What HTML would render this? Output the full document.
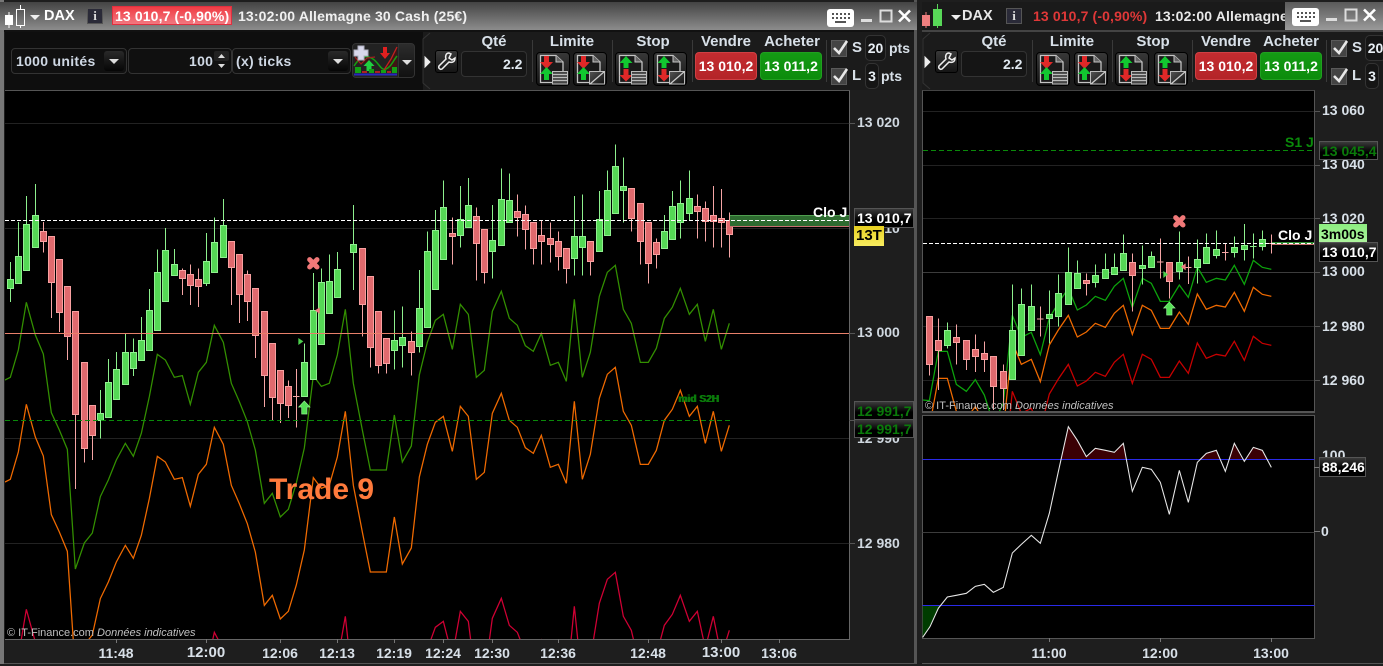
<!DOCTYPE html>
<html><head><meta charset="utf-8"><title>DAX</title>
<style>
html,body{margin:0;padding:0;background:#1e1e1e;width:1383px;height:666px;overflow:hidden}
#p{position:relative;width:1383px;height:666px;overflow:hidden;background:#1e1e1e;font:bold 14px/16px "Liberation Sans",Arial,sans-serif;color:#d8e0e8}
.a{position:absolute;box-sizing:border-box}
.t{position:absolute;white-space:nowrap}
.c{transform:translateX(-50%)}
.hl{font-size:15px}
.ls{letter-spacing:.3px}
.dd{position:absolute;width:20px;height:20px;border-radius:3px;background:linear-gradient(#2a2a2a,#050505)}
.dd:after{content:"";position:absolute;left:5px;top:8px;border:5px solid transparent;border-top:5px solid #ddd;border-bottom:0}
.box{position:absolute;box-sizing:border-box;border:1px solid #333;border-radius:4px;background:#101010}
.btn{position:absolute;box-sizing:border-box;width:34px;height:34px;top:52px;border-radius:4px;border:1px solid #000;background:linear-gradient(#383838,#141414)}
.btn svg{position:absolute;left:0;top:0}
.lab{position:absolute;box-sizing:border-box;white-space:nowrap;background:linear-gradient(#3a3a3a,#000 60%);border:1px solid #555;color:#fff;padding-left:2px;line-height:18px}
.sep{position:absolute;width:1px;top:40px;height:42px;background:#3a3a3a}
.chk{position:absolute;box-sizing:border-box;left:831px;width:16px;height:17px;background:#444;border:1px solid #5a5a5a}
svg{display:block}
</style></head><body><div id="p">

<!-- left window chrome -->
<div class="a" style="left:0;top:0;width:917px;height:664px;background:#1e1e1e;border-left:4px solid #777;border-right:3px solid #555"></div>
<div class="a" style="left:0;top:2px;width:917px;height:28px;background:linear-gradient(#444,#8c8c8c)"></div>
<div class="a" style="left:4px;top:30px;width:910px;height:2px;background:#111"></div>
<div class="a" style="left:5px;top:32px;width:909px;height:58px;background:#1b1b1b"></div>
<div class="a" style="left:5px;top:32px;width:418px;height:58px;background:#0e0e0e"></div>
<div class="a" style="left:5px;top:90px;width:845px;height:1px;background:#555"></div>
<div class="a" style="left:5px;top:91px;width:845px;height:549px;background:#000;border-right:1px solid #666;border-bottom:1px solid #666"></div>
<div class="a" style="left:4px;top:663px;width:910px;height:1px;background:#555"></div>

<!-- right window chrome -->
<div class="a" style="left:919px;top:0;width:464px;height:664px;background:#1e1e1e"></div>
<div class="a" style="left:922px;top:2px;width:461px;height:28px;background:#1a1a1a"></div>
<div class="a" style="left:1285px;top:2px;width:98px;height:28px;background:linear-gradient(#5a5a5a,#9a9a9a)"></div>
<div class="a" style="left:922px;top:30px;width:461px;height:2px;background:#444"></div>
<div class="a" style="left:922px;top:32px;width:461px;height:58px;background:#1b1b1b"></div>
<div class="a" style="left:922px;top:90px;width:393px;height:323px;background:#000;border:1px solid #555;border-top-color:#444;border-width:1px 1px 2px 1px"></div>
<div class="a" style="left:922px;top:415px;width:393px;height:224px;background:#000;border:1px solid #555"></div>
<div class="a" style="left:922px;top:663px;width:461px;height:1px;background:#555"></div>

<!-- charts -->
<svg class="a" style="left:0;top:0" width="1383" height="666" viewBox="0 0 1383 666">
<defs>
<clipPath id="cl"><rect x="5" y="91" width="844" height="548"/></clipPath>
<clipPath id="cr"><rect x="923" y="91" width="391" height="320"/></clipPath>
<path id="sr" fill="none" d="M8 630L28 632 55 484 82 484 109 583 139 604 166 569 193 615 220 700 250 640 277 376 304 442 334 427 361 494 388 384 415 339 445 295 472 360 499 345 526 319 556 331 583 289 610 265 637 352 667 265 694 280 721 334 748 334 778 285 805 322 832 231 859 277 889 265 916 270 943 226 973 283 1000 211 1027 232 1054 238"/>
</defs>

<!-- LEFT CHART -->
<g clip-path="url(#cl)">
<g stroke="#222" stroke-width="1" shape-rendering="crispEdges">
<path d="M5 123.500H849M5 228.500H849M5 438.500H849M5 543.500H849"/>
</g>
<g transform="translate(0 130) scale(.33333)" stroke-width="3.800" stroke-linejoin="miter" fill="none">
<path stroke="#339000" d="M15 750L31 742 55 660 79 517 106 615 130 672 154 848 178 900 202 958 226 1317 253 1239 277 1209 301 1100 325 1050 349 990 376 940 400 979 424 910 448 800 472 673 496 690 523 742 547 737 571 823 595 727 619 697 643 586 670 637 694 760 718 815 742 875 766 960 793 1120 817 1090 841 1161 865 1138 889 1059 913 954 940 737 964 769 988 760 1012 675 1036 538 1060 760 1087 900 1111 1020 1135 1020 1159 1020 1183 855 1207 996 1234 948 1258 735 1282 637 1306 571 1330 553 1357 658 1381 523 1405 553 1429 742 1453 721 1477 544 1504 484 1528 565 1552 586 1576 647 1600 664 1624 610 1651 706 1675 697 1699 754 1723 508 1747 742 1771 667 1798 499 1822 427 1846 406 1870 538 1894 580 1921 697 1945 697 1969 655 1993 565 2017 532 2041 475 2068 553 2092 523 2116 634 2140 538 2164 658 2188 580"/>
<path stroke="#f06a00" transform="translate(0 306)" d="M15 750L31 742 55 660 79 517 106 615 130 672 154 848 178 900 202 958 224.200 1290 235.300 1290 253 1239 277 1209 301 1100 325 1050 349 990 376 940 400 979 424 910 448 800 472 673 496 690 523 742 547 737 571 823 595 727 619 697 643 586 670 637 694 760 718 815 742 875 766 960 793 1120 817 1090 841 1161 865 1138 889 1059 913 954 940 737 964 769 988 760 1012 675 1036 538 1060 760 1087 900 1111 1020 1135 1020 1159 1020 1183 855 1207 996 1234 948 1258 735 1282 637 1306 571 1330 553 1357 658 1381 523 1405 553 1429 742 1453 721 1477 544 1504 484 1528 565 1552 586 1576 647 1600 664 1624 610 1651 706 1675 697 1699 754 1723 508 1747 742 1771 667 1798 499 1822 427 1846 406 1870 538 1894 580 1921 697 1945 697 1969 655 1993 565 2017 532 2041 475 2068 553 2092 523 2116 634 2140 538 2164 658 2188 580"/>
<path stroke="#d00034" transform="translate(0 921)" d="M56.700 650L79 517 106 615 120.700 650M629.200 650L643 586 670 637 672.500 650M1016.400 650L1036 538 1048.100 650M1278.800 650L1282 637 1306 571 1330 553 1354.900 650M1358.400 650L1381 523 1405 553 1417.300 650M1462.600 650L1477 544 1504 484 1528 565 1552 586 1576 647 1580.200 650M1606.200 650L1624 610 1635.300 650M1709.100 650L1723 508 1737.600 650M1773.700 650L1798 499 1822 427 1846 406 1870 538 1894 580 1910.200 650M1970.300 650L1993 565 2017 532 2041 475 2068 553 2092 523 2116 634 2140 538 2162.400 650M2166.500 650L2188 580"/>
</g>

<g transform="translate(0 130) scale(.33333)" shape-rendering="crispEdges">
<path stroke="#8df08d" stroke-width="3" fill="none" d="M31 396V516M55 276V460M79 198V422M106 162V352M301 780V926M325 687V862M349 666V808M376 612V764M400 625V738M424 561V691M448 477V661M472 358V602M496 294V515M523 357V437M619 309V468M643 262V428M670 207V382M913 640V800M940 429V748M964 415V643M988 373V550M1012 366V503"/>
<path stroke="#f5a5a5" stroke-width="3" fill="none" d="M130 276V368M154 320V564M178 388V606M202 468V690M226 544V1077M253 697V998M277 826V990M547 415V495M571 403V525M595 415V531M694 334V525M718 373V579M742 421V573M766 475V684M793 544V831M817 640V873M841 721V879M865 751V864M889 717V893M879 799H899"/>
<g transform="translate(-1 0)">
<path fill="#55d855" stroke="#90f090" stroke-width="3" d="M23 448h18V476h-18zM47 379h18V461h-18zM71 283h18V422h-18zM98 256h18V352h-18zM293 850h18V871h-18zM317 757h18V862h-18zM341 718h18V808h-18zM368 667h18V764h-18zM392 667h18V716h-18zM416 631h18V691h-18zM440 541h18V661h-18zM464 427h18V602h-18zM488 361h18V515h-18zM515 403h18V437h-18zM611 394h18V461h-18zM635 337h18V428h-18zM662 286h18V382h-18zM905 697h18V800h-18zM932 541h18V748h-18zM956 457h18V643h-18zM980 454h18V550h-18zM1004 418h18V503h-18z"/>
<path fill="#e06a6e" stroke="#f8a0a0" stroke-width="3" d="M122 304h18V335h-18zM146 319h18V458h-18zM170 388h18V548h-18zM194 469h18V620h-18zM218 544h18V854h-18zM245 697h18V956h-18zM269 826h18V916h-18zM539 421h18V445h-18zM563 433h18V467h-18zM587 448h18V470h-18zM686 334h18V412h-18zM710 373h18V493h-18zM734 433h18V515h-18zM758 475h18V616h-18zM785 544h18V736h-18zM809 640h18V802h-18zM833 721h18V820h-18zM857 769h18V826h-18z"/>
</g>
</g>
<g transform="translate(300 130) scale(.33333)" shape-rendering="crispEdges">
<path stroke="#8df08d" stroke-width="3" fill="none" d="M160 225V480M283 541V719M307 529V713M358 420V668M382 304V593M406 240V478M430 151V388M481 168V353M505 144V292M577 225V446M604 115V346M628 130V277M823 198V437M847 193V437M898 183V364M922 121V316M946 43V250M970 82V277"/>
<path stroke="#f5a5a5" stroke-width="3" fill="none" d="M187 355V620M211 439V713M235 544V731M259 625V731M334 604V737M457 262V404M529 232V452M553 298V461M652 193V320M676 226V359M700 277V404M724 271V403M751 277V398M775 304V422M799 355V461M871 334V437M994 175V305"/>
<g transform="translate(-1 0)">
<path fill="#55d855" stroke="#90f090" stroke-width="3" d="M152 343h18V367h-18zM275 631h18V661h-18zM299 622h18V646h-18zM350 535h18V650h-18zM374 364h18V593h-18zM398 301h18V478h-18zM422 232h18V388h-18zM473 268h18V316h-18zM497 226h18V292h-18zM569 331h18V364h-18zM596 208h18V346h-18zM620 211h18V277h-18zM815 319h18V385h-18zM839 319h18V352h-18zM890 268h18V364h-18zM914 181h18V316h-18zM938 109h18V250h-18zM962 169h18V181h-18z"/>
<path fill="#e06a6e" stroke="#f8a0a0" stroke-width="3" d="M179 355h18V523h-18zM203 439h18V652h-18zM227 544h18V706h-18zM251 625h18V700h-18zM326 634h18V667h-18zM449 310h18V319h-18zM521 259h18V340h-18zM545 298h18V427h-18zM644 244h18V262h-18zM668 253h18V298h-18zM692 277h18V355h-18zM716 316h18V334h-18zM743 325h18V343h-18zM767 334h18V379h-18zM791 355h18V415h-18zM863 334h18V394h-18zM986 175h18V265h-18z"/>
</g>
</g>
<g transform="translate(620 130) scale(.33333)" shape-rendering="crispEdges">
<path stroke="#8df08d" stroke-width="3" fill="none" d="M133 255V356M157 183V328M181 151V326M208 121V271"/>
<path stroke="#f5a5a5" stroke-width="3" fill="none" d="M61 220V404M85 277V461M109 325V416M232 193V326M256 214V335M280 168V352M304 177V352M328 247V383"/>
<g transform="translate(-1 0)">
<path fill="#55d855" stroke="#90f090" stroke-width="3" d="M125 304h18V356h-18zM149 229h18V328h-18zM173 220h18V277h-18zM200 205h18V250h-18z"/>
<path fill="#e06a6e" stroke="#f8a0a0" stroke-width="3" d="M53 220h18V334h-18zM77 277h18V401h-18zM101 337h18V373h-18zM224 229h18V244h-18zM248 235h18V274h-18zM272 256h18V274h-18zM296 265h18V277h-18zM320 271h18V313h-18z"/>
</g>
</g>
<!-- green band -->
<rect x="730" y="215" width="119" height="11" fill="#2e6b30"/>
<path d="M730 215.500H849" stroke="#4f9f4f" stroke-width="1"/>
<path d="M730 226.500H849" stroke="#c87070" stroke-width="1"/>
<path d="M5 333.500H849" stroke="#e8806a" stroke-width="1" shape-rendering="crispEdges"/>
<path d="M5 220.500H849" stroke="#fff" stroke-width="1" stroke-dasharray="4 2" shape-rendering="crispEdges"/>
<path d="M5 420.500H730" stroke="#0a8a0a" stroke-width="1" stroke-dasharray="5 3" shape-rendering="crispEdges"/>
<!-- markers -->
<g transform="translate(0 130) scale(.33333)">
<path d="M929 389L951 411M951 389L929 411" stroke="#f07878" stroke-width="15" stroke-linecap="round" fill="none"/>
<path d="M895 624L910 634 895 645z" fill="#4cd04c"/>
<path d="M959 532L945 541 959 552z" fill="#f07a80"/>
<path d="M913 813L930 831H921V852H905V831H896z" fill="#55e055" stroke="#90f090" stroke-width="2"/>
</g>
</g>
<path d="M849 123.500h6M849 333.500h6M849 543.500h6M849 420.500h5" stroke="#555" stroke-width="1" shape-rendering="crispEdges"/>
<path d="M116.500 639v4M206.500 639v4M280.500 639v4M337.500 639v4M394.500 639v4M443.500 639v4M492.500 639v4M558.500 639v4M648.500 639v4M721.500 639v4M779.500 639v4" stroke="#777" stroke-width="1" shape-rendering="crispEdges"/>

<!-- RIGHT CHART -->
<g clip-path="url(#cr)">
<path d="M923 111.500H1314M923 165.500H1314M923 218.500H1314M923 326.500H1314M923 380.500H1314" stroke="#222" stroke-width="1" shape-rendering="crispEdges"/>
<path d="M923 272.500H1314" stroke="#3c3c3c" stroke-width="1" shape-rendering="crispEdges"/>
<path d="M923 150.500H1314" stroke="#0a8a0a" stroke-width="1" stroke-dasharray="5 3" shape-rendering="crispEdges"/>
<g transform="translate(920 190) scale(.33333)" stroke-width="3.800">
<use href="#sr" stroke="#0ca40c"/>
<use href="#sr" stroke="#f06a00" transform="translate(0 81)"/>
<use href="#sr" stroke="#c80000" transform="translate(0 228)"/>
</g>
<g transform="translate(920 190) scale(.33333)" shape-rendering="crispEdges">
<path stroke="#8df08d" stroke-width="3" fill="none" d="M82 397V475M277 283V570M304 295V497M334 283V422M388 301V460M415 253V410M445 172V345M472 211V296M526 223V292M556 190V265M583 190V253M610 133V241M667 166V283M694 184V232"/>
<path stroke="#f5a5a5" stroke-width="3" fill="none" d="M28 379V557M55 385V600M109 403V524M139 451V540M166 433V546M193 454V546M220 499V660M250 523V660M361 349V440M351 387H371M499 250V317M637 190V365"/>
<g transform="translate(-1 0)">
<path fill="#55d855" stroke="#90f090" stroke-width="3" d="M74 421h18V467h-18zM269 421h18V569h-18zM296 343h18V497h-18zM326 349h18V422h-18zM380 373h18V386h-18zM407 310h18V380h-18zM437 247h18V344h-18zM464 250h18V296h-18zM518 256h18V277h-18zM548 238h18V265h-18zM575 232h18V253h-18zM602 190h18V241h-18zM659 226h18V235h-18zM686 199h18V232h-18z"/>
<path fill="#e06a6e" stroke="#f8a0a0" stroke-width="3" d="M20 379h18V523h-18zM47 451h18V482h-18zM101 442h18V458h-18zM131 451h18V509h-18zM158 478h18V500h-18zM185 490h18V509h-18zM212 499h18V590h-18zM242 544h18V596h-18zM491 271h18V280h-18zM629 217h18V256h-18z"/>
</g>
</g>
<g transform="translate(1150 190) scale(.33333)" shape-rendering="crispEdges">
<path stroke="#8df08d" stroke-width="3" fill="none" d="M88 124V268M142 148V280M169 130V220M199 121V205M253 139V202M283 102V211M310 130V205M300 170H320M337 121V181"/>
<path stroke="#f5a5a5" stroke-width="3" fill="none" d="M31 145V265M21 216H41M58 217V325M115 199V282M105 232H125M226 160V212M216 187H236M364 133V190M354 160H374"/>
<g transform="translate(-1 0)">
<path fill="#55d855" stroke="#90f090" stroke-width="3" d="M80 217h18V244h-18zM134 208h18V232h-18zM161 172h18V220h-18zM191 178h18V196h-18zM245 172h18V187h-18zM275 166h18V178h-18zM329 148h18V169h-18z"/>
<path fill="#e06a6e" stroke="#f8a0a0" stroke-width="3" d="M50 217h18V274h-18z"/>
</g>
</g>
<rect x="1272" y="242" width="42" height="2" fill="#2e8a30"/>
<path d="M1272 244.500H1314" stroke="#c87070" stroke-width="1"/>
<path d="M923 243.500H1314" stroke="#fff" stroke-width="1" stroke-dasharray="4 2" shape-rendering="crispEdges"/>
<g transform="translate(1150 190) scale(.33333)">
<path d="M77 83L99 105M99 83L77 105" stroke="#f07878" stroke-width="15" stroke-linecap="round" fill="none"/>
<path d="M40 243L54 253 40 264z" fill="#4cd04c"/>
<path d="M107 220L93 230 107 241z" fill="#f07a80"/>
<path d="M58 336L75 354H66V375H50V354H41z" fill="#55e055" stroke="#90f090" stroke-width="2"/>
</g>
</g>
<path d="M1314 111.500h6M1314 165.500h6M1314 218.500h6M1314 272.500h6M1314 326.500h6M1314 380.500h6" stroke="#555" stroke-width="1" shape-rendering="crispEdges"/>

<!-- LOWER PANEL -->
<g transform="translate(920 415) scale(.33333)">
<path fill="#3a0004" d="M422 133L445 35 472 76 499 125 526 100 556 106 583 112 610 85 618 133zM838 133L859 115 889 106 899 133zM928 133L943 85 966 133zM980 133L1000 97 1027 106 1042 133z"/>
<path fill="#003c00" d="M8 571V667L30 635 55 580 60 571z"/>
<path d="M8 352H1183" stroke="#3c3c3c" stroke-width="3" shape-rendering="crispEdges"/>
<path d="M8 133H1183M8 571H1183" stroke="#2a2ae8" stroke-width="3" shape-rendering="crispEdges"/>
<path fill="none" stroke="#e8e8e8" stroke-width="3.200" d="M8 667L30 635 55 580 82 546 109 541 139 535 166 514 193 508 220 532 250 517 277 414 304 388 334 361 361 385 388 295 415 170 445 35 472 76 499 125 526 100 556 106 583 112 610 85 637 229 667 157 694 163 721 202 748 298 778 166 805 262 832 142 859 115 889 106 916 169 943 85 973 139 1000 97 1027 106 1054 157"/>
</g>
<path d="M1314 531.500h6M1314 467.500h5M1049.500 638v4M1160.500 638v4M1271.500 638v4" stroke="#777" stroke-width="1" shape-rendering="crispEdges"/>
</svg>

<!-- chart text left -->
<div class="t" style="left:857px;top:114px;color:#d0d8e0">13 020</div>
<div class="t" style="left:857px;top:220px;color:#d0d8e0">13 010</div>
<div class="t" style="left:857px;top:324px;color:#d0d8e0">13 000</div>
<div class="t" style="left:857px;top:430px;color:#d0d8e0">12 990</div>
<div class="t" style="left:857px;top:535px;color:#d0d8e0">12 980</div>
<div class="t" style="left:813px;top:204px;color:#fff">Clo J</div>
<div class="lab" style="left:854px;top:208px;width:60px;height:20px">13 010,7</div>
<div class="a" style="left:854px;top:226px;width:30px;height:20px;background:linear-gradient(#e8d020,#f8ec60);color:#000;line-height:20px;padding-left:2px;font-size:15px">13T</div>
<div class="lab" style="left:854px;top:401px;width:60px;height:19px;color:#0a7a0a">12 991,7</div>
<div class="lab" style="left:854px;top:419px;width:60px;height:19px;color:#0a7a0a">12 991,7</div>
<div class="t" style="left:678px;top:393px;font-size:10px;line-height:14px;color:#0a7a0a;text-shadow:1px 0 0 #0a7a0a;letter-spacing:.1px">mid S2H</div>
<div class="t" style="left:269px;top:472px;font-size:30px;line-height:35px;color:#ff7a3c">Trade 9</div>
<div class="t" style="left:7px;top:626px;font:11px/14px 'Liberation Sans',sans-serif;color:#c0c0c0">© IT-Finance.com <i>Données indicatives</i></div>
<div class="t c" style="left:116px;top:645px">11:48</div>
<div class="t c" style="left:206px;top:645px;font-size:15px">12:00</div>
<div class="t c" style="left:280px;top:645px">12:06</div>
<div class="t c" style="left:337px;top:645px">12:13</div>
<div class="t c" style="left:394px;top:645px">12:19</div>
<div class="t c" style="left:443px;top:645px">12:24</div>
<div class="t c" style="left:492px;top:645px">12:30</div>
<div class="t c" style="left:558px;top:645px">12:36</div>
<div class="t c" style="left:648px;top:645px">12:48</div>
<div class="t c" style="left:721px;top:645px;font-size:15px">13:00</div>
<div class="t c" style="left:779px;top:645px">13:06</div>

<!-- chart text right -->
<div class="t" style="left:1322px;top:102px">13 060</div>
<div class="t" style="left:1322px;top:156px">13 040</div>
<div class="t" style="left:1322px;top:210px">13 020</div>
<div class="t" style="left:1322px;top:263px">13 000</div>
<div class="t" style="left:1322px;top:318px">12 980</div>
<div class="t" style="left:1322px;top:372px">12 960</div>
<div class="t" style="left:1285px;top:134px;color:#0a8a0a">S1 J</div>
<div class="lab" style="left:1319px;top:141px;width:59px;height:19px;color:#0a7a0a">13 045,4</div>
<div class="t" style="left:1278px;top:227px;color:#fff">Clo J</div>
<div class="a" style="left:1319px;top:224px;width:48px;height:20px;background:linear-gradient(#8cec80,#b0f4a0);color:#000;line-height:20px;padding-left:2px">3m00s</div>
<div class="lab" style="left:1319px;top:242px;width:59px;height:20px">13 010,7</div>
<div class="t" style="left:925px;top:399px;font:11px/14px 'Liberation Sans',sans-serif;color:#c0c0c0">© IT-Finance.com <i>Données indicatives</i></div>
<div class="t" style="left:1322px;top:447px">100</div>
<div class="lab" style="left:1319px;top:457px;width:47px;height:20px">88,246</div>
<div class="t" style="left:1321px;top:523px">0</div>
<div class="t c" style="left:1049px;top:645px">11:00</div>
<div class="t c" style="left:1160px;top:645px">12:00</div>
<div class="t c" style="left:1271px;top:645px">13:00</div>

<!-- left title -->
<svg class="a" style="left:4px;top:4px" width="40" height="24" viewBox="0 0 40 24">
<rect x="1" y="11" width="8" height="10" fill="#fff"/><path d="M5 8V24" stroke="#fff"/>
<rect x="12.500" y="5.500" width="8" height="16" fill="none" stroke="#fff"/><path d="M16.500 1V5M16.500 22V24" stroke="#fff"/>
<path d="M26 11H36L31 16z" fill="#eee"/>
</svg>
<div class="t" style="left:44px;top:8px;font-size:14.500px;color:#fff">DAX</div>
<div class="a" style="left:87px;top:8px;width:16px;height:16px;background:#2a2a38;border:1px solid #555;color:#ddd;font:bold 13px/14px 'Liberation Serif',serif;text-align:center">i</div>
<div class="a" style="left:112px;top:6px;width:120px;height:19px;background:linear-gradient(#f03c44,#f27880);border:1px solid #e03040;color:#fff;line-height:18px;padding-left:2px;white-space:nowrap;letter-spacing:.13px">13 010,7 (-0,90%)</div>
<div class="t" style="left:238px;top:8px;color:#f0f0f0;letter-spacing:.15px">13:02:00 Allemagne 30 Cash (25€)</div>

<!-- right title -->
<svg class="a" style="left:920px;top:4px" width="44" height="24" viewBox="0 0 44 24">
<rect x="2" y="11" width="8" height="11" fill="#f08080"/><path d="M6 8V24" stroke="#f08080"/>
<rect x="13" y="5" width="9" height="17" fill="#58d858"/><path d="M17.500 0V5M17.500 22V24" stroke="#58d858"/>
<path d="M31 11H41L36 16z" fill="#eee"/>
</svg>
<div class="t" style="left:962px;top:8px;font-size:14.500px;color:#e8e8e8">DAX</div>
<div class="a" style="left:1006px;top:8px;width:16px;height:16px;background:#2a2a38;border:1px solid #555;color:#ddd;font:bold 13px/14px 'Liberation Serif',serif;text-align:center">i</div>
<div class="t" style="left:1033px;top:8px;color:#e03838;letter-spacing:.13px">13 010,7 (-0,90%)</div>
<div class="t" style="left:1155px;top:8px;color:#e8e8e8;letter-spacing:.15px;width:130px;overflow:hidden">13:02:00 Allemagne</div>

<!-- window buttons -->
<svg class="a" style="left:0;top:0" width="1383" height="32" viewBox="0 0 1383 32">
<defs><g id="wb">
<rect x="0" y="0" width="27" height="18" rx="3" fill="#fff"/>
<path d="M5 4h2v2h-2zM9 4h2v2h-2zM13 4h2v2h-2zM17 4h2v2h-2zM21 4h2v2h-2zM5 8h2v2h-2zM9 8h2v2h-2zM13 8h2v2h-2zM17 8h2v2h-2zM21 8h2v2h-2zM8 12h11v2h-11z" fill="#555"/>
<path d="M34 10h11v3h-11z" fill="#ddd"/>
<rect x="53.500" y="1.500" width="11" height="11" fill="none" stroke="#ddd" stroke-width="2"/>
<path d="M72 1.500L83 12.500M83 1.500L72 12.500" stroke="#fff" stroke-width="2.600"/>
</g></defs>
<use href="#wb" x="827" y="9"/>
<use href="#wb" x="1292" y="8"/>
</svg>

<!-- left-only toolbar -->
<div class="box" style="left:11px;top:48px;width:116px;height:26px"></div>
<div class="t ls" style="left:16px;top:53px;color:#cfd8e4">1000 unités</div>
<div class="dd" style="left:104px;top:51px"></div>
<div class="box" style="left:128px;top:48px;width:104px;height:26px"></div>
<div class="t ls" style="left:189px;top:53px;color:#cfd8e4">100</div>
<div class="a" style="left:214px;top:51px;width:15px;height:10px;background:#222;border-radius:2px"></div>
<div class="a" style="left:214px;top:61px;width:15px;height:10px;background:#111;border-radius:2px"></div>
<svg class="a" style="left:214px;top:51px" width="15" height="20"><path d="M4 7L7.500 3 11 7zM4 13L11 13 7.500 17z" fill="#ddd"/></svg>
<div class="box" style="left:232px;top:48px;width:119px;height:26px"></div>
<div class="t ls" style="left:236px;top:53px;color:#cfd8e4">(x) ticks</div>
<div class="dd" style="left:328px;top:51px"></div>
<div class="a" style="left:352px;top:43px;width:47px;height:35px;background:#222;border:1px solid #333;border-radius:4px 0 0 4px"></div>
<svg class="a" style="left:353px;top:44px" width="45" height="33" viewBox="0 0 45 33">
<path d="M2 13L8 20 15 15 22 24 30 26 36 17 44 4V24C36 26 30 28 22 24 14 20 8 14 2 22z" fill="#4a1010" opacity=".8"/>
<path d="M1 22C8 11 14 11 20 15S28 27 33 25 40 17 44 12" fill="none" stroke="#12a012" stroke-width="1.500"/>
<path d="M2 13L8 20 14 14 22 13" fill="none" stroke="#a02020" stroke-width="1.200"/>
<path d="M31 26L38 15 44 3" fill="none" stroke="#c02020" stroke-width="1.300"/>
<path d="M5 2h6v4h4v6h-4v4h-6v-4h-4v-6h4z" fill="#d8d8ec" stroke="#b0b0c0"/>
<path d="M16 16l5.500 6h-3v5h-5v-5h-3z" fill="#20d040"/>
<path d="M30 3h4v6h3l-5 6-5-6h3z" fill="#e02020"/>
<path d="M2 23h6v6h-6zM16 25h5v4h-5zM28 26h5v3h-5zM39 23h5v6h-5z" fill="#14a014"/>
<path d="M9 27h5v2h-5zM22 27h5v2h-5zM34 27h4v2h-4z" fill="#b02020"/>
<path d="M1 30.500H44" stroke="#2828c0" stroke-width="2"/>
</svg>
<div class="a" style="left:398px;top:43px;width:17px;height:35px;background:linear-gradient(#2c2c2c,#111);border:1px solid #333;border-radius:0 4px 4px 0"></div>
<div class="a" style="left:402px;top:60px;border:5px solid transparent;border-top:5px solid #ddd;border-bottom:0"></div>

<!-- shared toolbar (left copy, right copy at +500) -->
<div class="a" style="left:0;top:0;width:917px;height:92px">
<svg class="a" style="left:420px;top:32px" width="16" height="58"><path d="M10 1L3 7V51L10 57" fill="none" stroke="#333"/><path d="M5 25L10 30 5 35z" fill="#eee" stroke="#eee"/></svg>
<div class="a" style="left:435px;top:50px;width:23px;height:23px;border:1px solid #000;border-radius:3px;background:linear-gradient(#383838,#151515)"></div>
<svg class="a" style="left:436px;top:51px" width="21" height="21" viewBox="0 0 21 21"><path d="M13 2C10 2 9 5 10 8L3 15C2 17 4 19 6 18L13 11C16 12 19 11 19 7L16 9 13 7 15 3z" fill="none" stroke="#eee" stroke-width="1.500"/></svg>
<div class="t c hl" style="left:494px;top:34px">Qté</div>
<div class="box" style="left:461px;top:51px;width:66px;height:26px;background:#151515"></div>
<div class="t" style="left:503px;top:56px;color:#e0e8f0">2.2</div>
<div class="sep" style="left:532px"></div>
<div class="t c hl" style="left:572px;top:34px">Limite</div>
<div class="btn" style="left:536px"><svg width="34" height="34" viewBox="0 0 34 34"><use href="#ic1"/></svg></div>
<div class="btn" style="left:573px"><svg width="34" height="34" viewBox="0 0 34 34"><use href="#ic2"/></svg></div>
<div class="sep" style="left:612px"></div>
<div class="t c hl" style="left:653px;top:34px">Stop</div>
<div class="btn" style="left:615px"><svg width="34" height="34" viewBox="0 0 34 34"><use href="#ic3"/></svg></div>
<div class="btn" style="left:653px"><svg width="34" height="34" viewBox="0 0 34 34"><use href="#ic4"/></svg></div>
<div class="sep" style="left:692px"></div>
<div class="t c hl" style="left:726px;top:34px">Vendre</div>
<div class="a" style="left:695px;top:52px;width:62px;height:28px;border-radius:4px;background:linear-gradient(#c42c30,#b42428);color:#fff;text-align:center;line-height:26px;border:1px solid #d04044">13 010,2</div>
<div class="t c hl" style="left:792px;top:34px">Acheter</div>
<div class="a" style="left:760px;top:52px;width:62px;height:28px;border-radius:4px;background:linear-gradient(#149a14,#0c8c0c);color:#fff;text-align:center;line-height:26px;border:1px solid #20a020">13 011,2</div>
<div class="sep" style="left:826px"></div>
<div class="chk" style="top:40px"></div>
<div class="chk" style="top:68px"></div>
<svg class="a" style="left:831px;top:38px" width="20" height="50"><path d="M3 10L8 15 16 3M3 38L8 43 16 31" fill="none" stroke="#e8e8e8" stroke-width="2.600"/></svg>
<div class="t" style="left:852px;top:40px;font-size:15px">S</div>
<div class="box" style="left:865px;top:35px;width:21px;height:26px;border-radius:5px;background:#151515;text-align:center;line-height:24px;color:#e8eef4">20</div>
<div class="t" style="left:889px;top:40px">pts</div>
<div class="t" style="left:852px;top:68px;font-size:15px">L</div>
<div class="box" style="left:865px;top:63px;width:14px;height:26px;border-radius:5px;background:#151515;text-align:center;line-height:24px;color:#e8eef4">3</div>
<div class="t" style="left:881px;top:68px">pts</div>
</div>

<div class="a" style="left:500px;top:0;width:883px;height:92px;overflow:hidden">
<svg class="a" style="left:420px;top:32px" width="16" height="58"><path d="M10 1L3 7V51L10 57" fill="none" stroke="#333"/><path d="M5 25L10 30 5 35z" fill="#eee" stroke="#eee"/></svg>
<div class="a" style="left:435px;top:50px;width:23px;height:23px;border:1px solid #000;border-radius:3px;background:linear-gradient(#383838,#151515)"></div>
<svg class="a" style="left:436px;top:51px" width="21" height="21" viewBox="0 0 21 21"><path d="M13 2C10 2 9 5 10 8L3 15C2 17 4 19 6 18L13 11C16 12 19 11 19 7L16 9 13 7 15 3z" fill="none" stroke="#eee" stroke-width="1.500"/></svg>
<div class="t c hl" style="left:494px;top:34px">Qté</div>
<div class="box" style="left:461px;top:51px;width:66px;height:26px;background:#151515"></div>
<div class="t" style="left:503px;top:56px;color:#e0e8f0">2.2</div>
<div class="sep" style="left:532px"></div>
<div class="t c hl" style="left:572px;top:34px">Limite</div>
<div class="btn" style="left:536px"><svg width="34" height="34" viewBox="0 0 34 34"><use href="#ic1"/></svg></div>
<div class="btn" style="left:574px"><svg width="34" height="34" viewBox="0 0 34 34"><use href="#ic2"/></svg></div>
<div class="sep" style="left:612px"></div>
<div class="t c hl" style="left:653px;top:34px">Stop</div>
<div class="btn" style="left:615px"><svg width="34" height="34" viewBox="0 0 34 34"><use href="#ic3"/></svg></div>
<div class="btn" style="left:654px"><svg width="34" height="34" viewBox="0 0 34 34"><use href="#ic4"/></svg></div>
<div class="sep" style="left:692px"></div>
<div class="t c hl" style="left:726px;top:34px">Vendre</div>
<div class="a" style="left:695px;top:52px;width:62px;height:28px;border-radius:4px;background:linear-gradient(#c42c30,#b42428);color:#fff;text-align:center;line-height:26px;border:1px solid #d04044">13 010,2</div>
<div class="t c hl" style="left:791px;top:34px">Acheter</div>
<div class="a" style="left:760px;top:52px;width:62px;height:28px;border-radius:4px;background:linear-gradient(#149a14,#0c8c0c);color:#fff;text-align:center;line-height:26px;border:1px solid #20a020">13 011,2</div>
<div class="sep" style="left:826px"></div>
<div class="chk" style="top:40px"></div>
<div class="chk" style="top:68px"></div>
<svg class="a" style="left:831px;top:38px" width="20" height="50"><path d="M3 10L8 15 16 3M3 38L8 43 16 31" fill="none" stroke="#e8e8e8" stroke-width="2.600"/></svg>
<div class="t" style="left:852px;top:40px;font-size:15px">S</div>
<div class="box" style="left:865px;top:35px;width:21px;height:26px;border-radius:5px;background:#151515;text-align:center;line-height:24px;color:#e8eef4">20</div>
<div class="t" style="left:852px;top:68px;font-size:15px">L</div>
<div class="box" style="left:865px;top:63px;width:14px;height:26px;border-radius:5px;background:#151515;text-align:center;line-height:24px;color:#e8eef4">3</div>
</div>

<!-- icon symbols -->
<svg width="0" height="0" style="position:absolute"><defs>
<g id="doc"><path d="M3.500 2.500H19L26 9V29.500H3.500z" fill="#1a1a1a" stroke="#c4c4c4" stroke-width="1.300"/><path d="M19 2.500V9H26" fill="#666" stroke="#c4c4c4"/></g>
<path id="dn" d="M7 3h5v6h4l-6.500 7-6.500-7h4z" fill="#e02828"/>
<path id="up" d="M9.500 14l6.500 7h-4v6h-5v-6h-4z" fill="#12c830"/>
<path id="up2" d="M10 3l6.500 7h-4v5h-5v-5h-4z" fill="#12c830"/>
<path id="dn2" d="M7.500 16h5v6h4l-6.500 6.500-6.500-6.500h4z" fill="#e02828"/>
<g id="tab"><rect x="15.500" y="18.500" width="15" height="12.500" fill="#444" stroke="#bbb"/><path d="M16 21.500h14M16 24.500h14M16 27.500h14" stroke="#bbb" stroke-width="1.300"/></g>
<g id="slb"><rect x="15.500" y="18.500" width="15" height="12.500" fill="url(#sg)" stroke="#bbb"/><path d="M16 31L30.500 18.500" stroke="#ccc" stroke-width="1.200"/></g>
<linearGradient id="sg" x1="0" y1="0" x2="1" y2="1"><stop offset="0" stop-color="#555"/><stop offset="1" stop-color="#111"/></linearGradient>
<g id="ic1"><use href="#doc"/><use href="#dn"/><use href="#up"/><use href="#tab"/></g>
<g id="ic2"><use href="#doc"/><use href="#dn"/><use href="#up"/><use href="#slb"/></g>
<g id="ic3"><use href="#doc"/><use href="#up2"/><use href="#dn2"/><use href="#tab"/></g>
<g id="ic4"><use href="#doc"/><use href="#up2"/><use href="#dn2"/><use href="#slb"/></g>
</defs></svg>

</div></body></html>
